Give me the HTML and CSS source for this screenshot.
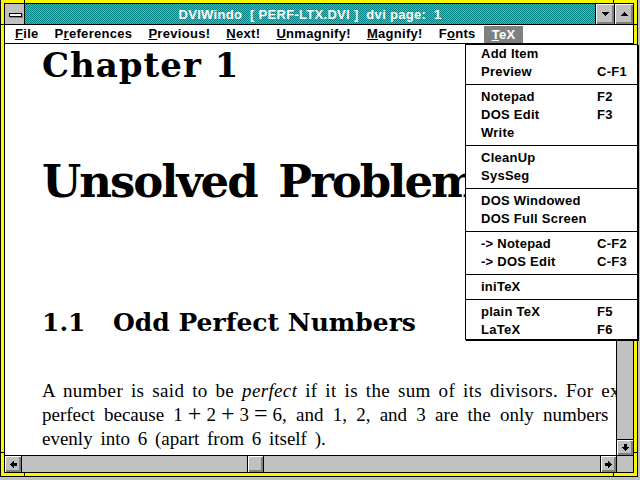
FILE: index.html
```html
<!DOCTYPE html>
<html>
<head>
<meta charset="utf-8">
<title>DVIWindo</title>
<link rel="stylesheet" href="styles.css">
</head>
<body>
<div class="window">
  <div class="inner">
    <div class="titlebar">
      <div class="sysmenu"><div class="sysbar"></div></div>
      <div class="caption">DVIWindo  [ PERF-LTX.DVI ]  dvi page:  1</div>
      <div class="tbtn"><svg width="7" height="4" shape-rendering="crispEdges"><path d="M0 0h7v1h-7z M1 1h5v1h-5z M2 2h3v1h-3z M3 3h1v1h-1z"/></svg></div>
      <div class="tbtn"><svg width="7" height="4" shape-rendering="crispEdges"><path d="M3 0h1v1h-1z M2 1h3v1h-3z M1 2h5v1h-5z M0 3h7v1h-7z"/></svg></div>
    </div>
    <div class="menubar">
      <span class="mi"><u>F</u>ile</span>
      <span class="mi">P<u>r</u>eferences</span>
      <span class="mi"><u>P</u>revious!</span>
      <span class="mi"><u>N</u>ext!</span>
      <span class="mi"><u>U</u>nmagnify!</span>
      <span class="mi"><u>M</u>agnify!</span>
      <span class="mi">F<u>o</u>nts</span>
      <span class="mi active"><u>T</u>eX</span>
    </div>
    <div class="client">
      <div class="doc">
        <div class="chapter">Chapter 1</div>
        <div class="title">Unsolved Problems</div>
        <div class="section"><span class="secnum">1.1</span>Odd Perfect Numbers</div>
        <div class="para">
          <div class="line just1">A number is said to be <i>perfect</i> if it is the sum of its divisors. For example, 6 is</div>
          <div class="line just2">perfect because 1<span class="op">+</span>2<span class="op">+</span>3<span class="op">=</span>6, and 1, 2, and 3 are the only numbers that divide</div>
          <div class="line">evenly into 6 (apart from 6 itself ).</div>
        </div>
      </div>
      <div class="vscroll">
        <div class="sbtn vdown"><svg width="7" height="7" shape-rendering="crispEdges"><path d="M2 0h3v3h-3z M0 3h7v1h-7z M1 4h5v1h-5z M2 5h3v1h-3z M3 6h1v1h-1z"/></svg></div>
      </div>
      <div class="hscroll">
        <div class="sbtn hleft"><svg width="7" height="7" shape-rendering="crispEdges"><path d="M3 0h1v7h-1z M2 1h1v5h-1z M1 2h1v3h-1z M0 3h1v1h-1z M4 2h3v3h-3z"/></svg></div>
        <div class="htrack"><div class="thumb" style="margin-left:225px"></div></div>
        <div class="sbtn hright"><svg width="7" height="7" shape-rendering="crispEdges"><path d="M3 0h1v7h-1z M4 1h1v5h-1z M5 2h1v3h-1z M6 3h1v1h-1z M0 2h3v3h-3z"/></svg></div>
      </div>
      <div class="corner"></div>
    </div>
  </div>
  <div class="dropdown">
    <div class="item"><span>Add Item</span></div>
    <div class="item"><span>Preview</span><span>C-F1</span></div>
    <div class="sep"></div>
    <div class="item"><span>Notepad</span><span>F2</span></div>
    <div class="item"><span>DOS Edit</span><span>F3</span></div>
    <div class="item"><span>Write</span></div>
    <div class="sep"></div>
    <div class="item"><span>CleanUp</span></div>
    <div class="item"><span>SysSeg</span></div>
    <div class="sep"></div>
    <div class="item"><span>DOS Windowed</span></div>
    <div class="item"><span>DOS Full Screen</span></div>
    <div class="sep"></div>
    <div class="item"><span>-&gt; Notepad</span><span>C-F2</span></div>
    <div class="item"><span>-&gt; DOS Edit</span><span>C-F3</span></div>
    <div class="sep"></div>
    <div class="item"><span>iniTeX</span></div>
    <div class="sep"></div>
    <div class="item"><span>plain TeX</span><span>F5</span></div>
    <div class="item"><span>LaTeX</span><span>F6</span></div>
  </div>
</div>
</body>
</html>
```

FILE: styles.css
```css
html, body {
  margin: 0;
  background: #c0c0c0;
}
body {
  width: 640px;
  height: 480px;
  overflow: hidden;
}
.window {
  position: relative;
  box-sizing: border-box;
  width: 638px;
  height: 478px;
  margin-top: -1px;
  border: 1px solid #000;
  padding: 3px;
  background:
    linear-gradient(#000, #000) 23px 0 / 1px 100% no-repeat,
    linear-gradient(#000, #000) calc(100% - 23px) 0 / 1px 100% no-repeat,
    linear-gradient(#000, #000) 0 24px / 100% 1px no-repeat,
    linear-gradient(#000, #000) 0 calc(100% - 23px) / 100% 1px no-repeat,
    repeating-conic-gradient(#ffff00 0% 25%, #d8d8c0 0% 50%) 0 0 / 2px 2px;
}
.inner {
  box-sizing: border-box;
  height: 100%;
  border: 1px solid #000;
  background: #fff;
  display: flex;
  flex-direction: column;
}
.titlebar {
  height: 20px;
  flex: none;
  border-bottom: 1px solid #000;
  display: flex;
  background: repeating-conic-gradient(#008080 0% 25%, #78a8a8 0% 50%) 0 0 / 2px 2px;
}
.sysmenu {
  box-sizing: border-box;
  width: 20px;
  padding-left: 1px;
  border-right: 1px solid #000;
  background: #c0c0c0;
  display: flex;
  align-items: center;
  justify-content: center;
}
.sysbar {
  width: 11px;
  height: 2px;
  background: #fff;
  border: 1px solid #000;
  box-shadow: 1px 1px 0 #808080;
  margin-top: 1px;
}
.caption {
  flex: 1;
  text-align: center;
  color: #fff;
  font: bold 13px "Liberation Sans", Arial, sans-serif;
  letter-spacing: 0.3px;
  line-height: 20px;
  padding-top: 1px;
  white-space: pre;
}
.tbtn {
  width: 18px;
  border-left: 1px solid #000;
  background: #c0c0c0;
  box-shadow: inset 1px 1px 0 #fff, inset -1px -1px 0 #808080, inset -2px -2px 0 #808080;
  display: flex;
  align-items: center;
  justify-content: center;
}
.tbtn svg, .sbtn svg {
  display: block;
  fill: #000;
}
.menubar {
  height: 18px;
  flex: none;
  border-bottom: 1px solid #000;
  display: flex;
  padding-left: 2px;
  font: bold 13px "Liberation Sans", Arial, sans-serif;
  letter-spacing: 0.3px;
  line-height: 18px;
  white-space: pre;
}
.mi {
  padding: 0 8px;
}
.mi u {
  text-decoration-thickness: 1px;
  text-underline-offset: 1px;
}
.mi.active {
  background: #808080;
  color: #fff;
  margin-top: 1px;
  line-height: 17px;
}
.client {
  flex: 1;
  min-height: 0;
  display: grid;
  grid-template-columns: 1fr 17px;
  grid-template-rows: 1fr 17px;
}
.doc {
  overflow: hidden;
  padding-left: 37px;
  background: #fff;
  color: #000;
  white-space: nowrap;
}
.chapter {
  font: bold 34px "DejaVu Serif", serif;
  letter-spacing: 1px;
  line-height: 40px;
  margin-top: 1px;
}
.title {
  font: bold 45px "DejaVu Serif", serif;
  letter-spacing: -2px;
  word-spacing: 8px;
  line-height: 50px;
  margin-top: 72px;
}
.section {
  font: bold 25px "DejaVu Serif", serif;
  line-height: 30px;
  margin-top: 101px;
}
.secnum {
  display: inline-block;
  width: 71px;
}
.para {
  font: 19px "Liberation Serif", serif;
  line-height: 24px;
  margin-top: 41px;
  word-spacing: 3px;
}
.just1 {
  word-spacing: 2.8px;
  letter-spacing: 0.35px;
}
.just2 {
  word-spacing: 4.5px;
}
.op {
  display: inline-block;
  font-size: 24px;
  line-height: 19px;
  margin: 0 5px;
}
.vscroll {
  border-left: 1px solid #000;
  background: #c0c0c0;
  display: flex;
  flex-direction: column;
  justify-content: flex-end;
}
.hscroll {
  border-top: 1px solid #000;
  background: #c0c0c0;
  display: flex;
}
.corner {
  border-left: 1px solid #000;
  border-top: 1px solid #000;
  background: #c0c0c0;
}
.sbtn {
  background: #c0c0c0;
  box-shadow: inset 1px 1px 0 #fff, inset -1px -1px 0 #808080, inset -2px -2px 0 #808080;
  display: flex;
  align-items: center;
  justify-content: center;
}
.vdown {
  height: 15px;
  border-top: 1px solid #000;
}
.hleft {
  width: 16px;
  border-right: 1px solid #000;
}
.hright {
  width: 15px;
  border-left: 1px solid #000;
}
.htrack {
  flex: 1;
  display: flex;
}
.thumb {
  width: 15px;
  border-left: 1px solid #000;
  border-right: 1px solid #000;
  background: #c0c0c0;
  box-shadow: inset 1px 1px 0 #fff, inset -1px -1px 0 #808080, inset -2px -2px 0 #808080;
}
.dropdown {
  position: absolute;
  left: 464px;
  top: 44px;
  width: 171px;
  border: 1px solid #000;
  box-shadow: 1px 1px 0 #000;
  background: #fff;
  font: bold 13px "Liberation Sans", Arial, sans-serif;
  letter-spacing: 0.25px;
  color: #000;
}
.item {
  display: grid;
  grid-template-columns: 116px auto;
  padding-left: 15px;
  height: 18px;
  line-height: 18px;
  white-space: pre;
}
.sep {
  height: 1px;
  background: #000;
  margin: 3px 0;
}
```
